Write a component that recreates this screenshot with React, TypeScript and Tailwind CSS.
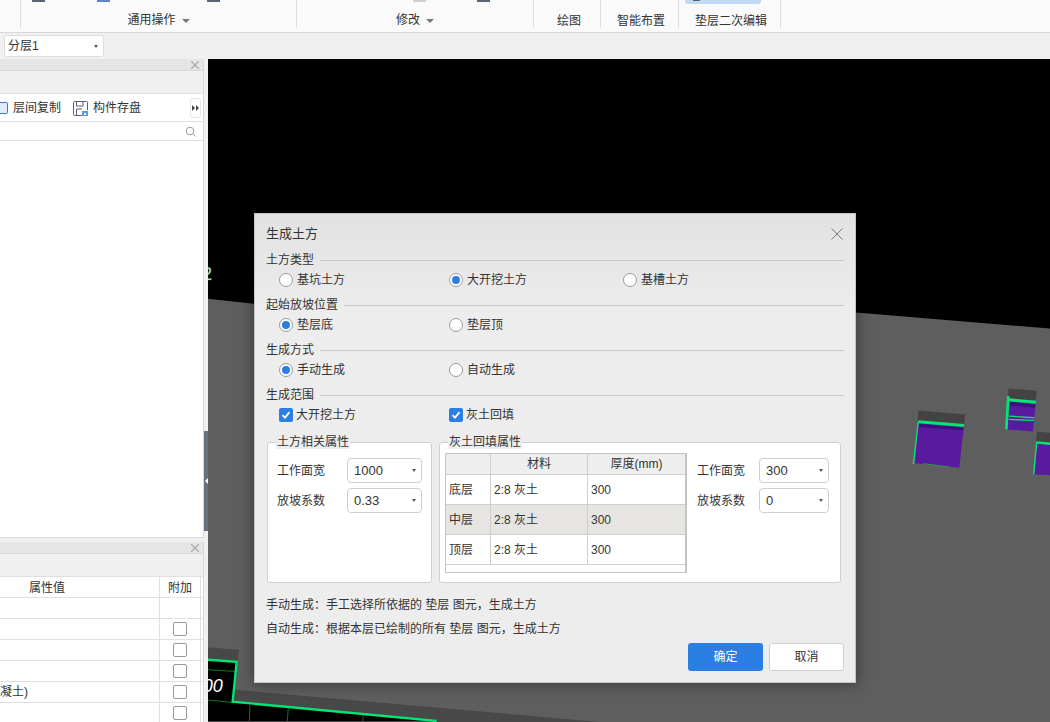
import { X } from "lucide-react";

const font = "font-['Liberation_Sans','Noto_Sans_CJK_SC',sans-serif]";

function Caret({ className = "" }: { className?: string }) {
  return <span className={"inline-block w-0 h-0 border-x-[4px] border-x-transparent border-t-[4px] border-t-[#777] " + className} />;
}

function SmallCaret() {
  return <span className="inline-block w-0 h-0 border-x-[2.5px] border-x-transparent border-t-[3px] border-t-[#555]" />;
}

function Radio({ label, checked }: { label: string; checked?: boolean }) {
  return (
    <div className="flex items-center gap-[4px] h-[20px]">
      <span className="w-[14px] h-[14px] rounded-full border border-[#9a9a9a] bg-white flex items-center justify-center">
        {checked && <span className="w-[8px] h-[8px] rounded-full bg-[#2b7fe3]" />}
      </span>
      <span>{label}</span>
    </div>
  );
}

function Check({ label }: { label: string }) {
  return (
    <div className="flex items-center gap-[3px] h-[20px]">
      <span className="w-[14px] h-[14px] rounded-[2px] bg-[#2b7fe3] flex items-center justify-center">
        <svg width="10" height="10" viewBox="0 0 10 10" fill="none">
          <path d="M1.5 5.2 L4 7.6 L8.5 2.2" stroke="white" strokeWidth="1.8" />
        </svg>
      </span>
      <span>{label}</span>
    </div>
  );
}

function Section({ title, children, mb }: { title: string; children: React.ReactNode; mb: string }) {
  return (
    <div className={mb}>
      <div className="flex items-center gap-[6px] h-[20px] pr-[11px]">
        <span>{title}</span>
        <span className="flex-1 h-px bg-[#c8c8c8]" />
      </div>
      <div className="flex pl-[13px]">{children}</div>
    </div>
  );
}

function Select({ value, width }: { value: string; width: string }) {
  return (
    <div className={"h-[25px] rounded-[4px] border border-[#cfcfcf] bg-white flex items-center justify-between pl-[6px] pr-[5px] text-[13px] " + width}>
      <span>{value}</span>
      <SmallCaret />
    </div>
  );
}

function Field({ label, value, width, gap }: { label: string; value: string; width: string; gap: string }) {
  return (
    <div className={"flex items-center " + gap}>
      <span>{label}</span>
      <Select value={value} width={width} />
    </div>
  );
}

function Row({ name, alt }: { name: string; alt?: boolean }) {
  const bg = alt ? "bg-[#e6e5e1]" : "bg-white";
  return (
    <div className={"flex h-[30px] border-b border-[#cfcfcf] " + bg}>
      <div className="w-[45px] pl-[3px] flex items-center border-r border-[#cfcfcf]">{name}</div>
      <div className="w-[97px] pl-[3px] flex items-center border-r border-[#cfcfcf]">2:8 灰土</div>
      <div className="flex-1 pl-[3px] flex items-center">300</div>
    </div>
  );
}

function Dialog() {
  return (
    <div className="absolute left-[254px] top-[213px] w-[602px] h-[470px] bg-[#ededed] border border-[#c4c4c4] text-[12px] text-[#333] shadow-[0_0_14px_rgba(0,0,0,0.45)] pl-[11px] bg-gradient-to-b from-[#e2e2e2] via-[#ededed] via-[22%] to-[#ededed]">
      <div className="flex items-center justify-between h-[36px] pt-[3px] pr-[12px] text-[13px]">
        <span>生成土方</span>
        <svg width="12" height="12" viewBox="0 0 12 12" fill="none">
          <path d="M.5 .5 L11.5 11.5 M11.5 .5 L.5 11.5" stroke="#777" strokeWidth="1" />
        </svg>
      </div>
      <Section title="土方类型" mb="mb-[5px]">
        <div className="w-[170px]"><Radio label="基坑土方" /></div>
        <div className="w-[174px]"><Radio label="大开挖土方" checked /></div>
        <Radio label="基槽土方" />
      </Section>
      <Section title="起始放坡位置" mb="mb-[5px]">
        <div className="w-[170px]"><Radio label="垫层底" checked /></div>
        <Radio label="垫层顶" />
      </Section>
      <Section title="生成方式" mb="mb-[5px]">
        <div className="w-[170px]"><Radio label="手动生成" checked /></div>
        <Radio label="自动生成" />
      </Section>
      <Section title="生成范围" mb="mb-[17px]">
        <div className="w-[170px]"><Check label="大开挖土方" /></div>
        <Check label="灰土回填" />
      </Section>
      <div className="flex gap-[7px] ml-[1px]">
        <div className="relative w-[165px] h-[141px] bg-white border border-[#cfcfcf] rounded-[3px] pl-[9px] pt-[15px] flex flex-col gap-[5px]">
          <span className="absolute left-[8px] -top-[8px] px-[1px] bg-[#ededed] leading-[14px]">土方相关属性</span>
          <Field label="工作面宽" value="1000" width="w-[75px]" gap="gap-[22px]" />
          <Field label="放坡系数" value="0.33" width="w-[75px]" gap="gap-[22px]" />
        </div>
        <div className="relative w-[402px] h-[141px] bg-white border border-[#cfcfcf] rounded-[3px] pl-[5px] pt-[10px] flex">
          <span className="absolute left-[8px] -top-[8px] px-[1px] bg-[#ededed] leading-[14px]">灰土回填属性</span>
          <div className="w-[242px] h-[120px] border border-[#c4c4c4] border-r-2 bg-white">
            <div className="flex h-[21px] bg-[#eeeeee] border-b border-[#cfcfcf]">
              <div className="w-[45px] border-r border-[#cfcfcf]" />
              <div className="w-[97px] border-r border-[#cfcfcf] flex items-center justify-center">材料</div>
              <div className="flex-1 flex items-center justify-center">厚度(mm)</div>
            </div>
            <Row name="底层" />
            <Row name="中层" alt />
            <Row name="顶层" />
          </div>
          <div className="ml-[10px] pt-[5px] flex flex-col gap-[5px]">
            <Field label="工作面宽" value="300" width="w-[70px]" gap="gap-[14px]" />
            <Field label="放坡系数" value="0" width="w-[70px]" gap="gap-[14px]" />
          </div>
        </div>
      </div>
      <p className="mt-[13px] leading-[18px]">手动生成：手工选择所依据的 垫层 图元，生成土方</p>
      <p className="mt-[6px] leading-[18px]">自动生成：根据本层已绘制的所有 垫层 图元，生成土方</p>
      <div className="flex justify-end gap-[6px] pr-[11px] mt-[5px]">
        <button className="w-[75px] h-[28px] rounded-[3px] bg-[#2b7fe3] text-white">确定</button>
        <button className="w-[75px] h-[28px] rounded-[3px] bg-white border border-[#cfcfcf]">取消</button>
      </div>
    </div>
  );
}

function Scene() {
  return (
    <svg className="w-full h-full block" viewBox="0 0 842 664" preserveAspectRatio="none">
      <rect width="842" height="664" fill="#000" />
      <polygon points="0,240 46,245 648,254 842,270 842,664 0,664" fill="#5e5e5e" />
      <text x="-6" y="221" fill="#fff" stroke="#0a8a2a" strokeWidth="0.5" fontSize="18" fontFamily="Liberation Sans">2</text>
      {/* blocks on the right, coords from a 3x crop */}
      <g transform="translate(642 231) scale(0.3333)" fill="none">
        <polygon points="205,363 346,375 342,405 203,395" fill="#434343" />
        <polygon points="205,400 342,408 328,535 195,522" fill="#5a1aa0" />
        <polygon points="207,403 340,415 340,423 207,413" fill="#3d1278" />
        <path d="M205 397 L342 408" stroke="#00e676" strokeWidth="9" />
        <path d="M205 397 L190 524" stroke="#00e676" strokeWidth="4" />
        <path d="M220 523 L298 533" stroke="#2f9a4a" strokeWidth="3" />

        <polygon points="475,297 561,304 557,333 475,327" fill="#434343" />
        <polygon points="478,335 557,342 549,426 473,420" fill="#5a1aa0" />
        <polygon points="480,337 556,345 555,355 479,348" fill="#3d1278" />
        <path d="M475 331 L558 338" stroke="#00e676" strokeWidth="9" />
        <path d="M477 380 L553 385 M477 390 L552 393" stroke="#00e676" strokeWidth="4" />
        <path d="M475 320 L469 420" stroke="#00e676" strokeWidth="8" />

        <polygon points="561,427 600,430 600,460 558,457" fill="#434343" />
        <polygon points="562,463 600,467 600,558 553,555" fill="#5a1aa0" />
        <path d="M560 459 L600 463" stroke="#00e676" strokeWidth="7" />
        <path d="M560 458 L551 555" stroke="#00e676" strokeWidth="4" />
      </g>
      {/* bottom-left corner of the plan */}
      <g transform="translate(-8 581) scale(0.3333)" fill="none">
        <polygon points="24,25 117,32 105,152 1210,250 24,250" fill="#484848" />
        <polygon points="24,60 110,70 97,190 710,246 24,246" fill="#000" />
        <path d="M24 92 L105 97 M24 183 L97 190 M150 198 L148 246 M265 208 L262 246 M490 230 L488 246" stroke="#0a7a20" strokeWidth="3" />
        <path d="M24 62 L110 68 L98 188 L710 246" stroke="#00e676" strokeWidth="7" />
        <text x="8" y="158" fill="#fff" fontSize="54" fontFamily="Liberation Sans" fontStyle="italic">00</text>
      </g>
    </svg>
  );
}

const rows = ["", "", "", "凝土)", ""];

export default function App() {
  return (
    <div className={"relative w-[1050px] h-[722px] overflow-hidden flex flex-col bg-[#f0f0f0] text-[12px] text-[#333] " + font}>
      <div className="h-[33px] bg-[#fafafa] border-b border-[#d8d8d8] flex pl-[20px] items-start shrink-0">
        <div className="relative w-[277px] h-[28px] border-x border-[#dcdcdc] flex items-end justify-center gap-[6px] pb-[1px] leading-[14px]">
          <span className="absolute left-[11px] top-0 w-[13px] h-[2px] bg-[#5a6472]" />
          <span className="absolute left-[76px] top-0 w-[13px] h-[2px] bg-[#5a86c4]" />
          <span className="absolute left-[186px] top-0 w-[13px] h-[2px] bg-[#5a6472]" />
          通用操作<Caret className="mb-[4px]" />
        </div>
        <div className="relative w-[237px] h-[28px] border-r border-[#dcdcdc] flex items-end justify-center gap-[6px] pb-[1px] leading-[14px]">
          <span className="absolute left-[116px] top-0 w-[13px] h-[2px] bg-[#cfcfcf]" />
          <span className="absolute left-[180px] top-0 w-[13px] h-[2px] bg-[#5a6472]" />
          修改<Caret className="mb-[4px]" />
        </div>
        <div className="w-[67px] h-[28px] border-r border-[#dcdcdc] flex items-end justify-center pl-[4px] leading-[14px]">绘图</div>
        <div className="w-[78px] h-[28px] border-r border-[#dcdcdc] flex items-end justify-center pl-[3px] leading-[14px]">智能布置</div>
        <div className="relative w-[102px] h-[28px] border-r border-[#dcdcdc] flex items-end justify-center pl-[3px] leading-[14px]">
          <span className="absolute left-[6px] top-0 w-[76px] h-[4px] bg-[#c2d9f3] rounded-b-[3px]" />
          <span className="absolute left-[14px] top-0 w-[7px] h-[1px] bg-[#5a6472]" />
          垫层二次编辑
        </div>
      </div>
      <div className="h-[26px] flex items-center pl-[4px] shrink-0">
        <div className="w-[100px] h-[22px] bg-white rounded-[3px] border border-[#dedede] flex items-center justify-between pl-[3px] pr-[5px]">
          <span>分层1</span>
          <SmallCaret />
        </div>
      </div>
      <div className="flex-1 flex min-h-0">
        <div className="relative w-[208px] shrink-0 flex flex-col pr-[4px] gap-[4px]">
          <span className="absolute right-0 top-[372px] w-[4px] h-[100px] bg-[#66717f] flex items-center justify-center">
            <span className="w-0 h-0 border-y-[3px] border-y-transparent border-r-[3px] border-r-white" />
          </span>
          <div className="h-[479px] shrink-0 flex flex-col border-r border-[#d8d8d8] bg-white">
            <div className="h-[12px] shrink-0 bg-[#e5e5e5] border-b border-[#d8d8d8] flex justify-end pr-[1px] items-center"><X size={14} strokeWidth={2} className="text-[#aaa]" /></div>
            <div className="h-[23px] shrink-0 bg-[#f0f0f0] border-b border-[#e0e0e0]" />
            <div className="h-[28px] shrink-0 border-b border-[#e0e0e0] flex items-center pt-[1px]">
              <span className="w-[8px] h-[12px] border border-[#2b7fe3] border-l-0 rounded-r-[2px] bg-[#e0ecfa] mr-[5px]" />
              <span>层间复制</span>
              <svg className="ml-[12px] mr-[5px]" width="15" height="15" viewBox="0 0 15 15" fill="none">
                <path d="M10 14.5 H1.5 a1 1 0 0 1 -1 -1 V1.5 a1 1 0 0 1 1 -1 H13.5 a1 1 0 0 1 1 1 V9 M3.5 14 V8 H9 M3.5 1 V5 H10 V1" stroke="#566070" strokeWidth="1" />
                <rect x="9" y="10" width="6" height="5" fill="#5b9be6" />
                <rect x="11" y="12" width="2" height="2" fill="#fff" />
              </svg>
              <span>构件存盘</span>
              <span className="ml-auto mr-[2px] w-[11px] h-[20px] border border-[#e4e4e4] rounded-[3px] flex items-center justify-center gap-[1px]">
                <span className="w-0 h-0 border-y-[3px] border-y-transparent border-l-[3px] border-l-[#444]" />
                <span className="w-0 h-0 border-y-[3px] border-y-transparent border-l-[3px] border-l-[#444]" />
              </span>
            </div>
            <div className="h-[19px] shrink-0 border-b border-[#e0e0e0] flex justify-end items-center pr-[7px]">
              <svg width="11" height="11" viewBox="0 0 11 11" fill="none"><circle cx="5" cy="5" r="3.8" stroke="#999" /><path d="M8 8 L10.5 10.5" stroke="#999" /></svg>
            </div>
            <div className="flex-1 border-b border-[#d8d8d8]" />
          </div>
          <div className="flex-1 min-h-0 flex flex-col border-r border-[#d8d8d8] bg-white overflow-hidden">
            <div className="h-[12px] shrink-0 bg-[#e5e5e5] border-b border-[#d8d8d8] flex justify-end pr-[1px] items-center"><X size={14} strokeWidth={2} className="text-[#aaa]" /></div>
            <div className="h-[23px] shrink-0 bg-[#f0f0f0] border-b border-[#e0e0e0]" />
            <div className="h-[21px] flex border-b border-[#e0e0e0] shrink-0">
              <div className="w-[160px] flex items-center pl-[29px] pt-[2px] border-r border-[#e0e0e0]">属性值</div>
              <div className="w-[41px] flex items-center justify-center pt-[2px] border-r border-[#e0e0e0]">附加</div>
            </div>
            <div className="h-[21px] flex border-b border-[#e0e0e0] shrink-0">
              <div className="w-[160px] border-r border-[#e0e0e0]" />
              <div className="w-[41px] border-r border-[#e0e0e0]" />
            </div>
            {rows.map((t, i) => (
              <div key={i} className="h-[21px] flex border-b border-[#e0e0e0] shrink-0">
                <div className="w-[160px] border-r border-[#e0e0e0] flex items-center">{t}</div>
                <div className="w-[41px] border-r border-[#e0e0e0] flex items-center justify-center">
                  <span className="w-[14px] h-[14px] rounded-[2px] border border-[#999] bg-white" />
                </div>
              </div>
            ))}
          </div>
        </div>
        <div className="flex-1 min-w-0"><Scene /></div>
      </div>
      <Dialog />
    </div>
  );
}
